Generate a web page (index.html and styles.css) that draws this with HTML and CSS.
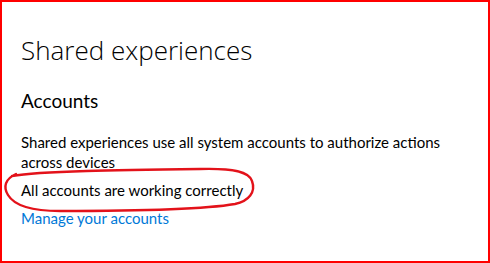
FILE: index.html
```html
<!DOCTYPE html>
<html lang="en">
<head>
<meta charset="utf-8">
<title>Shared experiences</title>
<link rel="stylesheet" href="styles.css">
</head>
<body>
<div class="frame">
  <h1 class="title">Shared experiences</h1>
  <h2 class="section">Accounts</h2>
  <p class="desc">Shared experiences use all system accounts to authorize actions across devices</p>
  <p class="status">All accounts are working correctly</p>
  <a class="link" href="#">Manage your accounts</a>
  <svg class="mark" width="490" height="263" viewBox="0 0 490 263" aria-hidden="true">
    <path d="M12,176 C40,171 120,170 200,169 C234,168 249,172 252,181 C256,192 249,201 235,204 C200,210 120,211 60,211 C30,211 14,205 8,195 C3,187 5,179 16,174" fill="none" stroke="#e3121a" stroke-width="2.4" stroke-linecap="round" stroke-linejoin="round"/>
  </svg>
</div>
</body>
</html>
```
FILE: styles.css
```css
html, body {
  margin: 0;
  padding: 0;
  background: #fff;
}
.frame {
  position: relative;
  box-sizing: border-box;
  width: 490px;
  height: 263px;
  border: 2px solid #ff0000;
  padding: 30px 0 0 19px;
  display: flex;
  flex-direction: column;
  align-items: flex-start;
  color: #000;
  font-family: "Lato", "Open Sans", sans-serif;
  overflow: hidden;
}
.title {
  margin: 0;
  font-family: "Open Sans", "Lato", sans-serif;
  font-weight: 300;
  font-size: 26px;
  line-height: 36px;
}
.section {
  margin: 19px 0 0;
  font-weight: 400;
  font-size: 19px;
  line-height: 28px;
}
.desc {
  margin: 17px 0 0;
  width: 440px;
  font-size: 15px;
  line-height: 20px;
}
.status {
  margin: 8px 0 0;
  font-size: 15px;
  line-height: 20px;
}
.link {
  margin-top: 8px;
  font-size: 15px;
  line-height: 20px;
  color: #0078d7;
  text-decoration: none;
}
.mark {
  position: absolute;
  left: -2px;
  top: -2px;
  pointer-events: none;
}
```
